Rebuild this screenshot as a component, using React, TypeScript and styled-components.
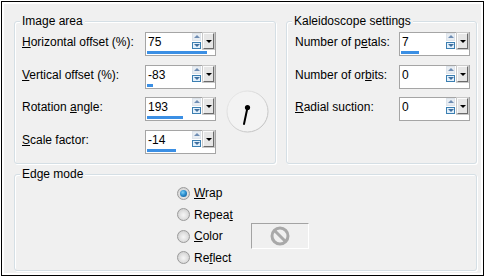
import React from "react";
import styled, { createGlobalStyle } from "styled-components";

const GlobalStyle = createGlobalStyle`
  html, body {
    margin: 0;
    padding: 0;
    background: #fff;
  }
  body {
    font-family: "Liberation Sans", Arial, sans-serif;
    font-size: 12px;
    color: #000;
  }
`;

interface ISpinField {
  label: React.ReactNode;
  value: number;
  min: number;
  max: number;
}

const BAR_MAX = 68;

function SpinField(props: ISpinField) {
  const fill = Math.round(((props.value - props.min) / (props.max - props.min)) * BAR_MAX);
  return (
    <>
      <Label>{props.label}</Label>
      <SpinBox>
        <SpinTop>
          <Value>{props.value}</Value>
          <Arrows>
            <ArrowBtn>
              <TriUp />
            </ArrowBtn>
            <ArrowBtn $active>
              <TriDown />
            </ArrowBtn>
          </Arrows>
          <DropBtn>
            <DropTri />
          </DropBtn>
        </SpinTop>
        <Bar style={{ width: fill }} />
      </SpinBox>
    </>
  );
}

function Dial() {
  return (
    <DialWrap width="43" height="43" viewBox="0 0 43 43">
      <defs>
        <linearGradient id="ring" x1="0" y1="0" x2="1" y2="1">
          <stop offset="0" stopColor="#ececec" />
          <stop offset="1" stopColor="#b9b9b9" />
        </linearGradient>
      </defs>
      <circle cx="21.5" cy="21.5" r="20.5" fill="#f3f3f3" stroke="url(#ring)" strokeWidth="1" />
      <line x1="21.5" y1="17.5" x2="18" y2="34" stroke="#000" strokeWidth="2" strokeLinecap="round" />
      <circle cx="21.5" cy="17.5" r="2.6" fill="#000" />
    </DialWrap>
  );
}

interface IRadio {
  checked?: boolean;
  children: React.ReactNode;
}

function Radio(props: IRadio) {
  return (
    <RadioRow>
      <RadioDot $checked={props.checked} />
      <span>{props.children}</span>
    </RadioRow>
  );
}

function NoIcon() {
  return (
    <svg width="22" height="22" viewBox="0 0 22 22">
      <circle cx="11" cy="11" r="8" fill="none" stroke="#a9a9a9" strokeWidth="3" />
      <line x1="5.5" y1="5.5" x2="16.5" y2="16.5" stroke="#a9a9a9" strokeWidth="3" />
    </svg>
  );
}

function App() {
  return (
    <>
      <GlobalStyle />
      <Frame>
        <Panel>
          <TopRow>
            <Group $width={262}>
              <GroupTitle>Image area</GroupTitle>
              <ImageGrid>
                <SpinField label={<><Key>H</Key>orizontal offset (%):</>} value={75} min={-100} max={100} />
                <SpinField label={<><Key>V</Key>ertical offset (%):</>} value={-83} min={-100} max={100} />
                <SpinField label={<>Rotation <Key>a</Key>ngle:</>} value={193} min={0} max={360} />
                <SpinField label={<><Key>S</Key>cale factor:</>} value={-14} min={-100} max={100} />
                <Dial />
              </ImageGrid>
            </Group>
            <Group $width={191}>
              <GroupTitle>Kaleidoscope settings</GroupTitle>
              <KaleidoGrid>
                <SpinField label={<>Number of p<Key>e</Key>tals:</>} value={7} min={1} max={24} />
                <SpinField label={<>Number of or<Key>b</Key>its:</>} value={0} min={0} max={32} />
                <SpinField label={<><Key>R</Key>adial suction:</>} value={0} min={0} max={100} />
              </KaleidoGrid>
            </Group>
          </TopRow>
          <EdgeGroup>
            <GroupTitle>Edge mode</GroupTitle>
            <EdgeGrid>
              <Radio checked><Key>W</Key>rap</Radio>
              <Radio>Repea<Key>t</Key></Radio>
              <Radio><Key>C</Key>olor</Radio>
              <Swatch>
                <NoIcon />
              </Swatch>
              <Radio>Re<Key>f</Key>lect</Radio>
            </EdgeGrid>
          </EdgeGroup>
        </Panel>
      </Frame>
    </>
  );
}

export default App;

const Frame = styled.div`
  margin: 1px;
  width: 483px;
  height: 275px;
  box-sizing: border-box;
  border: 1px solid #000;
  padding: 2px;
  background: #fff;
`;

const Panel = styled.div`
  width: 100%;
  height: 100%;
  box-sizing: border-box;
  padding: 17px 4px 2px 10px;
  background: #f0f0f0;
  display: flex;
  flex-direction: column;
  gap: 10px;
`;

const TopRow = styled.div`
  display: flex;
  gap: 10px;
  height: 143px;
`;

const Group = styled.div<{ $width?: number }>`
  position: relative;
  box-sizing: border-box;
  width: ${(p) => (p.$width ? `${p.$width}px` : "auto")};
  border: 1px solid #d5dfe5;
  border-radius: 3px;
  box-shadow: inset 1px 1px 0 #fff, 1px 1px 0 #fff;
`;

const EdgeGroup = styled(Group)`
  flex: 1;
`;

const GroupTitle = styled.span`
  position: absolute;
  top: -8px;
  left: 5px;
  padding: 0 2px;
  line-height: 14px;
  background: #f0f0f0;
  white-space: nowrap;
`;

const ImageGrid = styled.div`
  display: grid;
  grid-template-columns: 123px 71px 53px;
  grid-template-rows: 33px 32px 33px 24px;
  padding: 10px 0 0 7px;
`;

const KaleidoGrid = styled.div`
  display: grid;
  grid-template-columns: 104px 71px;
  grid-template-rows: 33px 32px 33px;
  padding: 10px 0 0 8px;
`;

const Label = styled.div`
  grid-column: 1;
  padding-top: 3px;
  line-height: 14px;
  white-space: nowrap;
`;

const Key = styled.span`
  text-decoration: underline;
`;

const SpinBox = styled.div`
  grid-column: 2;
  align-self: start;
  box-sizing: border-box;
  width: 71px;
  height: 24px;
  border: 1px solid #a5a5a5;
  background: #fff;
  display: flex;
  flex-direction: column;
`;

const SpinTop = styled.div`
  display: flex;
  height: 16px;
  padding-right: 1px;
`;

const Value = styled.div`
  flex: 1;
  padding: 2px 0 0 2px;
  line-height: 14px;
`;

const Arrows = styled.div`
  width: 9px;
  margin-right: 2px;
  display: flex;
  flex-direction: column;
  gap: 1px;
`;

const ArrowBtn = styled.div<{ $active?: boolean }>`
  flex: 1;
  box-sizing: border-box;
  display: flex;
  align-items: center;
  justify-content: center;
  border: 1px solid ${(p) => (p.$active ? "#3c7fb1" : "#dde3ea")};
  background: ${(p) => (p.$active ? "#e3f0fb" : "#e8edf2")};
`;

const TriUp = styled.div`
  width: 0;
  height: 0;
  border-left: 3px solid transparent;
  border-right: 3px solid transparent;
  border-bottom: 3px solid #6f8db3;
`;

const TriDown = styled.div`
  width: 0;
  height: 0;
  border-left: 3px solid transparent;
  border-right: 3px solid transparent;
  border-top: 3px solid #3f6f9f;
`;

const DropBtn = styled.div`
  width: 11px;
  box-sizing: border-box;
  display: flex;
  align-items: center;
  justify-content: center;
  background: #e6e6e6;
  border-top: 1px solid #fbfbfb;
  border-left: 1px solid #fbfbfb;
  border-right: 1px solid #6b6b6b;
  border-bottom: 1px solid #6b6b6b;
  box-shadow: 0 0 0 1px #c9c9c9;
`;

const DropTri = styled.div`
  width: 0;
  height: 0;
  border-left: 3px solid transparent;
  border-right: 3px solid transparent;
  border-top: 3px solid #000;
`;

const Bar = styled.div`
  height: 3px;
  margin: 2px 0 0 1px;
  background: #3b8fe4;
`;

const DialWrap = styled.svg`
  grid-column: 3;
  grid-row: 3;
  margin: -7px 0 0 10px;
`;

const EdgeGrid = styled.div`
  display: grid;
  grid-template-columns: 74px 58px;
  grid-template-rows: 22px 21px 22px 21px;
  padding: 7px 0 0 162px;
`;

const RadioRow = styled.div`
  grid-column: 1;
  display: flex;
  align-items: center;
  gap: 4px;
  white-space: nowrap;
`;

const RadioDot = styled.span<{ $checked?: boolean }>`
  position: relative;
  box-sizing: border-box;
  width: 13px;
  height: 13px;
  border-radius: 50%;
  border: 1px solid #9a9a9a;
  background: radial-gradient(circle at 50% 55%, #f6f6f6 0%, #e2e2e2 45%, #c4c4c4 100%);
  &::after {
    content: "";
    display: ${(p) => (p.$checked ? "block" : "none")};
    position: absolute;
    left: 2px;
    top: 2px;
    width: 7px;
    height: 7px;
    border-radius: 50%;
    background: radial-gradient(circle at 40% 35%, #7fd0f5 0%, #2b8fd0 45%, #0e4f87 100%);
  }
`;

const Swatch = styled.div`
  grid-column: 2;
  grid-row: 3;
  align-self: center;
  box-sizing: border-box;
  width: 58px;
  height: 26px;
  border-top: 1px solid #a3a3a3;
  border-left: 1px solid #a3a3a3;
  border-right: 1px solid #fff;
  border-bottom: 1px solid #fff;
  display: flex;
  align-items: center;
  justify-content: center;
`;
